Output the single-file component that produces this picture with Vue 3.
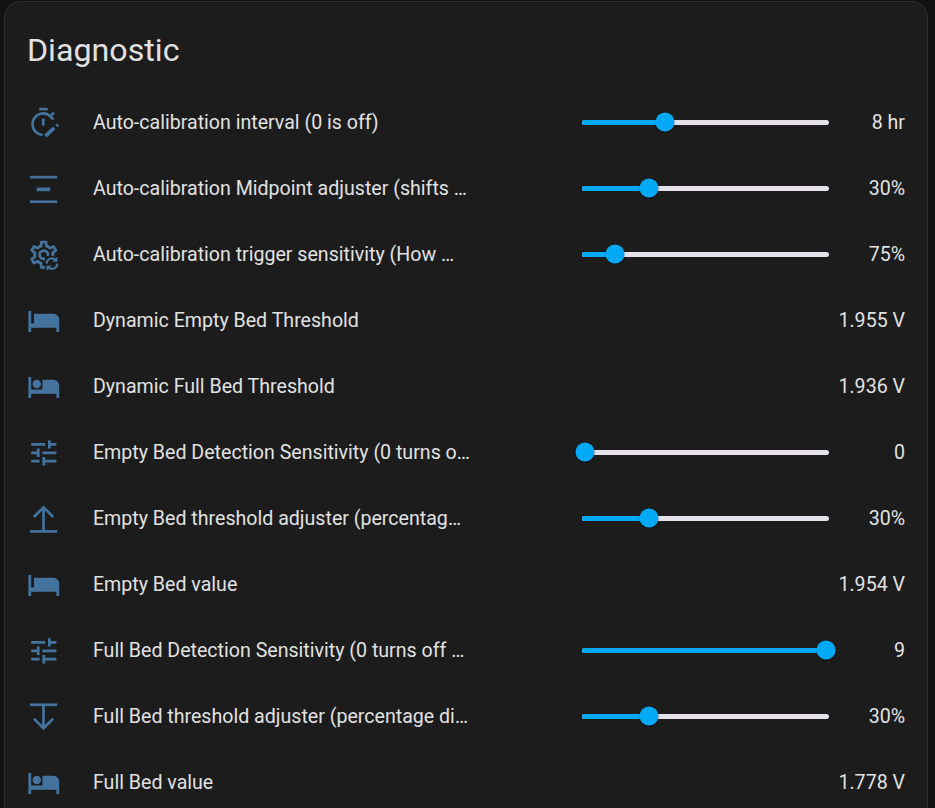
<script setup>
const cog = "M12,8A4,4 0 0,1 16,12A4,4 0 0,1 12,16A4,4 0 0,1 8,12A4,4 0 0,1 12,8M12,10A2,2 0 0,0 10,12A2,2 0 0,0 12,14A2,2 0 0,0 14,12A2,2 0 0,0 12,10M10,22C9.75,22 9.54,21.82 9.5,21.58L9.13,18.93C8.5,18.68 7.96,18.34 7.44,17.94L4.95,18.95C4.73,19.03 4.46,18.95 4.34,18.73L2.34,15.27C2.21,15.05 2.27,14.78 2.46,14.63L4.57,12.97L4.5,12L4.57,11L2.46,9.37C2.27,9.22 2.21,8.95 2.34,8.73L4.34,5.27C4.46,5.05 4.73,4.96 4.95,5.05L7.44,6.05C7.96,5.66 8.5,5.32 9.13,5.07L9.5,2.42C9.54,2.18 9.75,2 10,2H14C14.25,2 14.46,2.18 14.5,2.42L14.87,5.07C15.5,5.32 16.04,5.66 16.56,6.05L19.05,5.05C19.27,4.96 19.54,5.05 19.66,5.27L21.66,8.73C21.79,8.95 21.73,9.22 21.54,9.37L19.43,11L19.5,12L19.43,13L21.54,14.63C21.73,14.78 21.79,15.05 21.66,15.27L19.66,18.73C19.54,18.95 19.27,19.04 19.05,18.95L16.56,17.95C16.04,18.34 15.5,18.68 14.87,18.93L14.5,21.58C14.46,21.82 14.25,22 14,22H10M11.25,4L10.88,6.61C9.68,6.86 8.62,7.5 7.85,8.39L5.44,7.35L4.69,8.65L6.8,10.2C6.4,11.37 6.4,12.64 6.8,13.8L4.68,15.36L5.43,16.66L7.86,15.62C8.63,16.5 9.68,17.14 10.87,17.38L11.24,20H12.76L13.13,17.39C14.32,17.14 15.37,16.5 16.14,15.62L18.57,16.66L19.32,15.36L17.2,13.81C17.6,12.64 17.6,11.37 17.2,10.2L19.31,8.65L18.56,7.35L16.15,8.39C15.38,7.5 14.32,6.86 13.12,6.62L12.75,4H11.25Z";
const bedEmpty = "M19,7H5V14H3V5H1V20H3V17H21V20H23V11A4,4 0 0,0 19,7Z";
const bedFull = "M19,7H11V14H3V5H1V20H3V17H21V20H23V11A4,4 0 0,0 19,7M7,13A3,3 0 0,0 10,10A3,3 0 0,0 7,7A3,3 0 0,0 4,10A3,3 0 0,0 7,13Z";
const tune = "M3,17V19H9V17H3M3,5V7H13V5H3M13,21V19H21V17H13V15H11V21H13M7,9V11H3V13H7V15H9V9H7M21,13V11H11V13H21M15,9H17V7H21V5H17V3H15V9Z";

const rows = [
  { icon: "timer", label: "Auto-calibration interval (0 is off)", value: "8 hr", pos: 33.4 },
  { icon: "middle", label: "Auto-calibration Midpoint adjuster (shifts thresholds up or down)", value: "30%", pos: 26.4 },
  { icon: "cogsync", label: "Auto-calibration trigger sensitivity (How much change triggers)", value: "75%", pos: 12.5 },
  { icon: "bedEmpty", label: "Dynamic Empty Bed Threshold", value: "1.955 V" },
  { icon: "bedFull", label: "Dynamic Full Bed Threshold", value: "1.936 V" },
  { icon: "tune", label: "Empty Bed Detection Sensitivity (0 turns off detection)", value: "0", pos: 0 },
  { icon: "up", label: "Empty Bed threshold adjuster (percentage difference)", value: "30%", pos: 26.4 },
  { icon: "bedEmpty", label: "Empty Bed value", value: "1.954 V" },
  { icon: "tune", label: "Full Bed Detection Sensitivity (0 turns off detection)", value: "9", pos: 100 },
  { icon: "down", label: "Full Bed threshold adjuster (percentage difference)", value: "30%", pos: 26.4 },
  { icon: "bedFull", label: "Full Bed value", value: "1.778 V" },
];
const fills = { bedEmpty, bedFull, tune };
</script>

<template>
  <div class="page">
    <section class="card">
      <h1 class="title">Diagnostic</h1>
      <div class="rows">
        <div v-for="row in rows" :key="row.label" class="row">
          <svg class="icon" viewBox="0 0 24 24">
            <path v-if="fills[row.icon]" :d="fills[row.icon]" fill="currentColor" />
            <g v-else-if="row.icon === 'timer'" fill="none" stroke="currentColor" stroke-width="1.9">
              <path d="M8.8 2.200h6" />
              <path d="M11.600 9v5" />
              <path d="M17.400 6.500l1.900-1.800" />
              <path d="M11.200 20.700A7.700 7.700 0 1 1 18.600 9.800" />
              <path d="M13.200 21.500L19.400 15.700" stroke-width="2.700" />
              <path d="M21 14.300l1.100-1" stroke-width="2.200" />
            </g>
            <g v-else-if="row.icon === 'middle'" fill="currentColor">
              <rect x="2.100" y="2.700" width="19.400" height="1.900" />
              <rect x="6.900" y="11.100" width="9.700" height="2.600" />
              <rect x="2.100" y="20.300" width="19.400" height="1.900" />
            </g>
            <g v-else-if="row.icon === 'cogsync'">
              <path :d="cog" fill="currentColor" />
              <rect x="12.800" y="12.800" width="11.200" height="11.200" fill="#1c1c1c" />
              <g fill="none" stroke="currentColor" stroke-width="1.500">
                <path d="M14 18.300a3.800 3.800 0 0 1 6.300-2.800" />
                <path d="M21.600 18.300a3.800 3.800 0 0 1-6.300 2.800" />
              </g>
              <path d="M21.700 13.300v3.600h-3.600zM13.900 23.400v-3.600h3.600z" fill="currentColor" />
            </g>
            <g v-else-if="row.icon === 'up'" fill="none" stroke="currentColor" stroke-width="1.900">
              <path d="M2.100 21h19.400" />
              <path d="M11.800 21V4" />
              <path d="M4.900 10.700l6.900-6.900 6.900 6.900" />
            </g>
            <g v-else fill="none" stroke="currentColor" stroke-width="1.900">
              <path d="M2.100 3.400h19.400" />
              <path d="M11.800 3.400v17" />
              <path d="M4.900 13.300l6.900 6.900 6.900-6.900" />
            </g>
          </svg>
          <div class="label">{{ row.label }}</div>
          <div v-if="row.pos !== undefined" class="slider">
            <div class="track">
              <div class="fill" :style="{ width: `calc(3px + (100% - 6px) * ${row.pos / 100})` }"></div>
              <div class="thumb" :style="{ left: `calc(3px + (100% - 6px) * ${row.pos / 100})` }"></div>
            </div>
          </div>
          <div class="value">{{ row.value }}</div>
        </div>
      </div>
    </section>
  </div>
</template>

<style scoped>
.page {
  height: 808px;
  overflow: hidden;
  background: #111111;
  padding: 1px 7px 0 4px;
  box-sizing: border-box;
  font-family: Roboto, "Liberation Sans", sans-serif;
  color: #e1e1e1;
}
.card {
  height: 900px;
  box-sizing: border-box;
  background: #1c1c1c;
  border: 1px solid #2f2f2f;
  border-radius: 16px;
  padding: 0 22px;
}
.title {
  margin: 0;
  height: 87px;
  padding-top: 27px;
  box-sizing: border-box;
  font-size: 32.2px;
  line-height: 42px;
  font-weight: 400;
}
.rows {
  display: flex;
  flex-direction: column;
}
.row {
  height: 66px;
  display: flex;
  align-items: center;
}
.icon {
  width: 33.6px;
  height: 33.6px;
  flex: none;
  margin: 2px 32.4px 0 0;
  color: #44739e;
}
.label {
  width: 378px;
  flex: none;
  padding-top: 1px;
  font-size: 19.6px;
  line-height: 24px;
  white-space: nowrap;
  overflow: hidden;
  text-overflow: ellipsis;
}
.slider {
  width: 247px;
  flex: none;
  margin-left: 111px;
}
.track {
  position: relative;
  height: 5px;
  border-radius: 3px;
  background: #e6e0e9;
}
.fill {
  height: 100%;
  border-radius: 3px;
  background: #03a9f4;
}
.thumb {
  position: absolute;
  top: 50%;
  width: 19px;
  height: 19px;
  border-radius: 50%;
  background: #03a9f4;
  transform: translate(-50%, -50%);
  box-shadow: 0 1px 2px rgba(0, 0, 0, 0.3);
}
.value {
  flex: 1;
  padding-top: 1px;
  text-align: right;
  font-size: 19.6px;
  line-height: 24px;
  white-space: nowrap;
}
</style>

<style>
html, body { background: #111111; }
</style>
